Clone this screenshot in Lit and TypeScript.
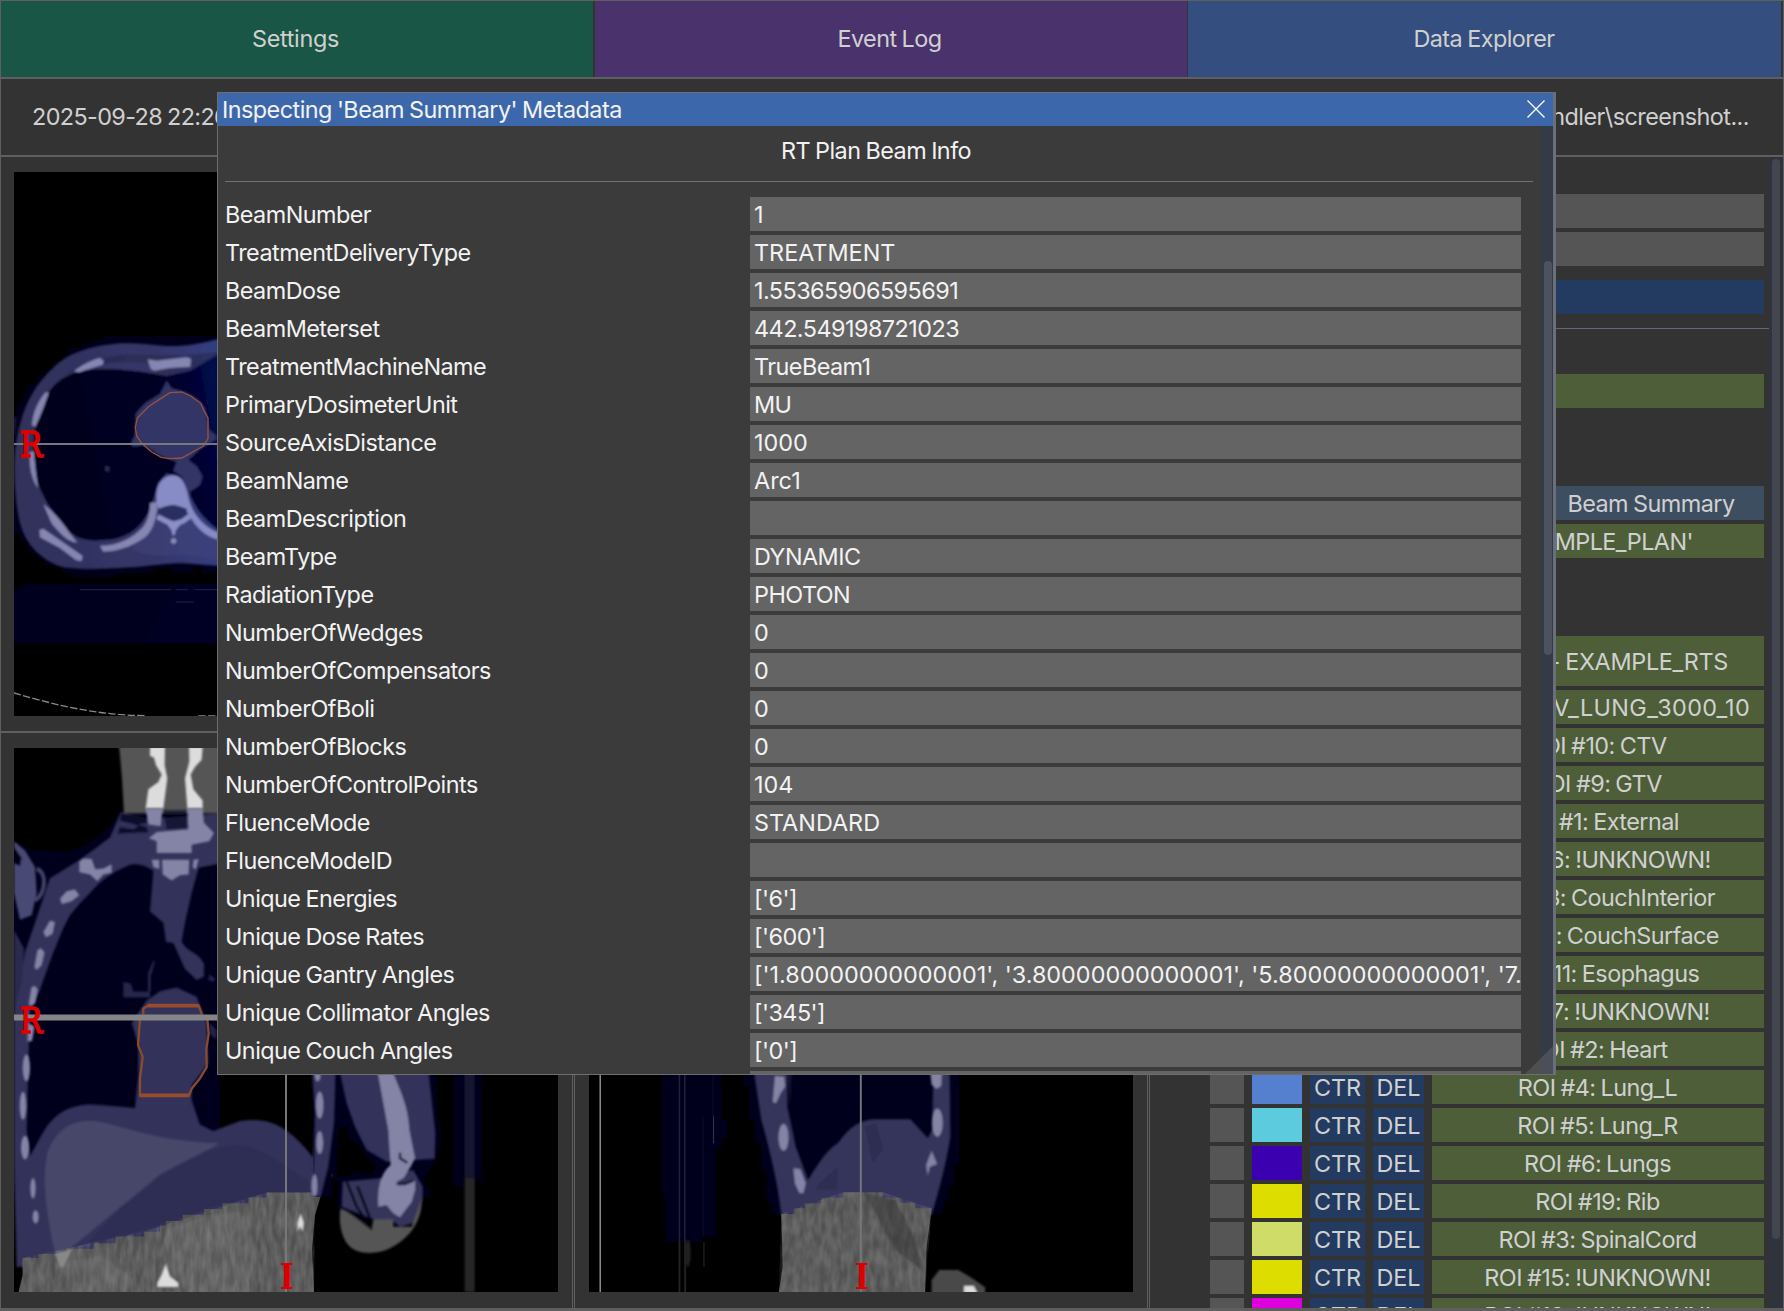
import { LitElement, html, css, svg } from "lit";
import { customElement } from "lit/decorators.js";
import { classMap } from "lit/directives/class-map.js";

// Label, value, and whether the value is set without tightened tracking.
const beamFields: [string, string, boolean?][] = [
  ["BeamNumber", "1"],
  ["TreatmentDeliveryType", "TREATMENT", true],
  ["BeamDose", "1.55365906595691"],
  ["BeamMeterset", "442.549198721023"],
  ["TreatmentMachineName", "TrueBeam1"],
  ["PrimaryDosimeterUnit", "MU"],
  ["SourceAxisDistance", "1000", true],
  ["BeamName", "Arc1", true],
  ["BeamDescription", ""],
  ["BeamType", "DYNAMIC"],
  ["RadiationType", "PHOTON"],
  ["NumberOfWedges", "0"],
  ["NumberOfCompensators", "0"],
  ["NumberOfBoli", "0"],
  ["NumberOfBlocks", "0"],
  ["NumberOfControlPoints", "104", true],
  ["FluenceMode", "STANDARD", true],
  ["FluenceModeID", ""],
  ["Unique Energies", "['6']"],
  ["Unique Dose Rates", "['600']"],
  ["Unique Gantry Angles", "['1.80000000000001', '3.80000000000001', '5.80000000000001', '7.", true],
  ["Unique Collimator Angles", "['345']"],
  ["Unique Couch Angles", "['0']"],
  ["", ""],
];

const rois: [string, string][] = [
  ["ROI #8: PTV_LUNG_3000_10", "#dd0000"],
  ["ROI #10: CTV", "#dd7700"],
  ["ROI #9: GTV", "#dd5500"],
  ["ROI #1: External", "#00dd00"],
  ["ROI #16: !UNKNOWN!", "#dddd00"],
  ["ROI #13: CouchInterior", "#5580cf"],
  ["ROI #12: CouchSurface", "#5580cf"],
  ["ROI #11: Esophagus", "#dddd00"],
  ["ROI #17: !UNKNOWN!", "#dddd00"],
  ["ROI #2: Heart", "#dd00dd"],
  ["ROI #4: Lung_L", "#5580cf"],
  ["ROI #5: Lung_R", "#5bcbdd"],
  ["ROI #6: Lungs", "#3b00b0"],
  ["ROI #19: Rib", "#dddd00"],
  ["ROI #3: SpinalCord", "#d0dc68"],
  ["ROI #15: !UNKNOWN!", "#dddd00"],
  ["ROI #18: !UNKNOWN!", "#dd00dd"],
];

const filters = svg`
  <defs>
    <filter id="soft"><feGaussianBlur stdDeviation="2.4" /></filter>
    <filter id="grain" x="0" y="0" width="1" height="1">
      <feTurbulence type="fractalNoise" baseFrequency=".06 .02" numOctaves="2" seed="4" />
      <feColorMatrix values="0 0 0 0 .45  0 0 0 0 .45  0 0 0 0 .45  .5 0 0 0 -.12" />
      <feComposite in2="SourceGraphic" operator="in" />
    </filter>
  </defs>`;

const axial = svg`
  <defs>
    <linearGradient id="tissue" x1="0" x2="1" y1="0" y2="0">
      <stop offset="0" stop-color="#30305a" /><stop offset=".7" stop-color="#36366a" /><stop offset="1" stop-color="#333e80" />
    </linearGradient>
    <linearGradient id="lung" gradientUnits="userSpaceOnUse" x1="100" x2="660" y1="400" y2="300">
      <stop offset="0" stop-color="#00001c" /><stop offset=".7" stop-color="#000024" /><stop offset=".88" stop-color="#000232" /><stop offset="1" stop-color="#000a4c" />
    </linearGradient>
  </defs>
  ${filters}
  <g transform="translate(-14 148) scale(.33333)">
    <path fill="#00001a" d="M660 48H380V48H315V60H275V70H245V84H205V104H190V125H165V150H140V165H110V195H85V220H70V250H50V290H42V640H60V665H85V700H110V715H135V735H165V745H190V758H215V772H345V760H440V757H460V745H515V758H545V758H580V742H605V760H660Z" />
    <path fill="#00001e" d="M42 807H68V792H660V970H42Z" />
    <path fill="#000030" d="M520 792H660V970H440Z" opacity=".35" filter="url(#soft)" />
    <g filter="url(#soft)">
      <path fill="url(#tissue)" d="M660 56C600 70 560 80 500 78C440 72 400 68 360 70C290 76 230 90 180 125C130 165 90 220 70 280C50 340 45 380 43 430C42 500 50 570 60 610C80 680 130 725 190 742C260 752 330 745 400 742C470 735 530 725 580 732L660 738Z" />
      <path fill="#42467c" d="M400 655L460 600L580 600L660 650V720C600 715 560 700 520 705C470 712 430 700 400 690Z" opacity=".45" />
      <path fill="#28284c" d="M230 155C300 120 400 125 450 128V150L500 168L570 150L660 112V95L560 105L440 104C350 100 280 110 200 160Z" opacity=".6" />
      <path fill="url(#lung)" d="M148 215C170 175 220 155 260 150C330 142 420 152 500 168L570 152L660 100V632C620 608 590 570 572 530L560 480L500 460L474 490C450 590 420 640 340 658C260 668 230 656 205 632C160 580 112 520 106 450C95 380 100 280 148 215Z" />
      <path fill="#333566" d="M500 183L515 205C560 215 600 235 615 265L628 330L648 345L650 358L625 372L600 387L565 420L592 440L608 470L600 495L570 515L545 470L520 452L530 425L500 415C470 405 450 385 430 376L400 380L392 372L405 345L408 280L435 250L480 222Z" />
      <g fill="#8586b2">
        <path d="M222 154C240 138 270 122 300 114L311 122L308 134C280 142 255 150 238 157Z" />
        <path d="M443 118L470 122L560 112L573 116L571 140L510 144L462 152L452 146Z" />
        <path d="M138 216L146 220C135 250 125 280 106 320L96 316C98 280 115 240 138 216Z" />
        <path d="M90 395H102C104 430 108 460 114 505C96 480 86 440 90 395Z" />
        <path d="M130 552C160 575 190 610 208 638L232 668C200 665 180 640 155 610Z" />
        <path d="M118 630L130 626L248 708L244 724L228 720L180 684L120 652Z" />
        <path d="M300 677C350 678 400 655 430 620C445 600 450 575 450 550L474 545C470 600 455 640 430 655C395 680 350 695 310 695Z" />
        <path d="M518 466C545 464 560 500 566 535C575 580 610 620 655 638V658C610 650 580 610 556 566C530 552 500 552 476 568L470 545C464 500 485 468 518 466Z" fill="#888cc6" />
      </g>
      <path fill="#2a2f60" d="M474 566L520 554L560 566L562 590L520 606L480 590Z" />
      <path fill="none" stroke="#8a8fc8" stroke-width="15" d="M472 590L500 604L522 612L548 604L570 588" />
      <path fill="#8a8fc8" d="M498 608H546L528 630L524 646H518L514 630Z" />
      <circle cx="521" cy="663" r="8" fill="#8a8cbc" /><ellipse cx="322" cy="446" rx="7" ry="9" fill="#2a2a48" />
      <path fill="#222248" d="M42 282L48 300L45 340L42 350Z" />
    </g>
    <path fill="none" stroke="#98533f" stroke-width="4" d="M510 218L545 216L572 228L602 250L612 272L624 294V356L610 378L578 396L545 414L510 416L484 412L455 396L425 370L410 348L406 322L412 294L445 260L488 232Z" />
    <path stroke="#242444" stroke-width="3" d="M240 809H513M527 809H563M585 809H660M527 846H581" />
    <path stroke="#77777f" stroke-width="6" d="M42 372H660" />
    <path fill="none" stroke="#8a8a8a" stroke-width="4" stroke-dasharray="22 7" d="M42 1119C150 1150 280 1186 440 1187M595 1188H660" />
    <text class="mark" transform="translate(59 412) scale(.86 1)">R</text>
  </g>`;

const coronal = svg`
  ${filters}
  <g transform="translate(-14 -18) scale(.33333 .37054)">
    <path fill="#00001c" d="M42 300L100 325H150L200 330L260 310L330 260L365 215H660V1260H1000V930H1000V1260H960L800 1250L630 1290L430 1360L280 1385L68 1425L42 1240Z" />
    <g filter="url(#soft)">
      <path fill="#545454" d="M357 40H660V225H372L366 130Z" />
      <path fill="#33335a" d="M362 222L450 240L660 225V360L596 372L575 440L555 520L545 570C560 600 590 595 612 630V665L590 675L555 645L520 575L498 572L490 520L450 490L460 380C430 362 400 358 380 368C350 380 320 395 290 420C260 450 235 470 210 500C185 540 175 570 160 600L120 700L90 760L85 900L80 1080L90 1150L130 1085C170 1020 240 1005 300 1012L405 1020L415 930V850L395 790L440 730L480 705L530 695L590 720L620 790L625 900L575 960L575 1000L600 1065L640 1082L720 1055C800 1045 860 1060 940 1155L950 930H1000V1200L965 1240L940 1310V1350L50 1450L42 1180V760L75 600L150 400L240 350L330 290Z" />
      <path fill="#00001c" d="M362 226L440 232L442 250L415 255L440 262L445 276L352 280L360 262L400 268L415 258L360 245Z" opacity=".75" />
      <path fill="#00001c" d="M490 215H560V265L500 268Z" opacity=".6" />
      <path fill="#47476a" d="M140 1150C160 1080 220 1050 280 1055C350 1060 450 1110 660 1115L480 1200L330 1310L210 1400L165 1410C145 1330 125 1230 140 1150Z" />
      <path fill="#2b2b50" d="M480 1200C560 1160 640 1120 720 1120C800 1130 860 1180 930 1220V1250H800L630 1290L430 1350L260 1385L340 1310Z" opacity=".55" />
      <path fill="#4a4a74" d="M42 300L75 325L105 370L110 440L95 500L60 512L42 440Z" />
      <path fill="none" stroke="#42426c" stroke-width="12" d="M110 375C142 385 138 440 105 460" />
      <path fill="#000018" d="M42 315L65 345L60 368L42 360Z" />
      <path fill="#2a2a4e" d="M42 540L72 590L65 680L42 760Z" />
      <path fill="#26264c" d="M370 680L392 684L400 706H450V722H370ZM444 655L462 620L464 628L452 665V705H444Z" />
      <path fill="#232350" d="M628 660L645 670L640 680L625 675ZM628 790L650 810L648 835L630 820Z" />
    </g>
    <path fill="#505050" d="M68 1425H115V1414H198V1400H282V1385H347V1367H432V1354H480V1337H498V1325H548V1308H612V1293H667V1277H745V1262H800V1248H965L945 1310L936 1400L942 1518H56L68 1470Z" />
    <path fill="#6a6a6a" opacity=".4" filter="url(#soft)" d="M500 1345L620 1310L720 1300L770 1400L740 1518H560L480 1420ZM160 1440L300 1420L400 1480L380 1518H240Z" />
    <path fill="#fff" filter="url(#grain)" d="M68 1425L430 1354L800 1248H945L942 1518H56Z" />
    <path filter="url(#soft)" fill="#888" d="M165 1412L218 1400L190 1450H180Z" />
    <g filter="url(#soft)" fill="#dcdcdc">
      <path d="M450 45H495L494 95L502 130L490 212H437L445 160L475 140L485 120L468 95L462 75L450 70Z" /><path d="M567 45H608L605 80L585 100L572 120L580 160L608 190V212H562L555 130L568 85Z" />
      <path d="M497 1440L510 1475L535 1492V1503H472V1492L485 1470Z" /><path d="M902 1305L912 1330L908 1354L900 1340L893 1354L892 1330Z" />
    </g>
    <g fill="#8484a6" filter="url(#soft)">
      <path d="M437 212H488L482 260L445 255ZM562 212H608L612 250L642 278L628 300L575 310V332H470V300L446 292L470 275L565 268Z" />
      <path d="M455 350H478V376L460 370ZM486 350H568L566 390L540 392L515 406L488 390ZM580 350L596 348L588 376L578 372Z" />
      <path d="M238 355L250 347L275 348L286 376L310 374L335 362V385L310 390L292 408L270 390L238 384ZM180 455L200 435L225 430L238 446L215 462L185 470ZM130 545L150 514L165 518L158 550L138 560ZM103 640L112 595L122 588L134 600L125 635L110 648ZM86 740L94 695L104 690L114 700L105 738L92 745ZM82 840L84 790L104 800L96 840Z" />
      <ellipse cx="79" cy="912" rx="11" ry="36" /><ellipse cx="69" cy="1014" rx="10" ry="38" /><ellipse cx="75" cy="1127" rx="12" ry="32" /><ellipse cx="99" cy="1237" rx="8" ry="28" /><ellipse cx="107" cy="1314" rx="9" ry="18" />
    </g>
    <path fill="none" stroke="#8b4a2d" stroke-width="7" d="M430 768V752L443 744H596L606 768M420 780L414 850L428 882L420 940V986H567L575 968L600 940L620 910L619 860L626 820L622 780" />
    <path stroke="#9a4c2a" stroke-width="10" d="M443 744H596M420 986H567" />
    <path stroke="#858587" stroke-width="16" d="M42 776H660" />
    <text class="mark" transform="translate(59 818) scale(.86 .9)">R</text>
  </g>
  <g transform="translate(186 302) scale(.33333)">
    <path fill="#00001c" d="M340 60H710V195L722 230V285L705 330L670 395L692 430V442H640L590 530L510 510L412 475L415 400L395 370V440H340Z" />
    <path fill="#000" d="M415 232H445V262L480 290L500 320L530 350L515 375L470 362L440 380H410V340Z" />
    <path fill="#00001c" d="M760 60H845V392L790 388V408H760Z" />
    <rect x="794" y="60" width="30" height="322" fill="#151530" filter="url(#soft)" /><rect x="794" y="382" width="30" height="344" fill="#262626" filter="url(#soft)" />
    <g filter="url(#soft)">
      <path fill="#33335a" d="M336 60H407L402 220L385 350L362 440L335 438L342 320L345 190ZM418 60H685L706 250L704 326L640 330L560 335L500 300L465 230L440 160Z" />
      <path fill="#34345c" d="M428 395L540 385L640 360L668 410V450L640 520L600 530L575 510L520 508L425 470Z" />
      <path fill="#555" d="M422 475L450 490L515 540L520 508H580V530H635L665 445C668 500 640 560 570 595C530 615 470 615 445 585C422 560 415 510 422 475Z" />
      <path fill="none" stroke="#00000c" stroke-width="7" d="M440 395L470 470L515 538M472 408L512 510M435 478L500 520" />
      <path fill="#8484a6" d="M532 60H575C600 120 625 170 628 240L645 325L632 350L610 385L588 396L620 402L645 392V420L635 455L612 485L600 502L580 490L560 465L535 470C532 420 540 370 572 345L565 240Z" />
      <path fill="none" stroke="#10102c" stroke-width="7" d="M600 308V325L622 338M590 402H615L640 392" />
      <g fill="#8484a6"><ellipse cx="353" cy="76" rx="8" ry="18" /><ellipse cx="359" cy="165" rx="11" ry="40" /><ellipse cx="359" cy="278" rx="10" ry="34" /><ellipse cx="343" cy="407" rx="9" ry="34" /></g>
    </g>
    <path stroke="#77777b" stroke-width="6" d="M258 60V726" />
    <text class="mark bold" transform="translate(239 716) scale(.87 1)">I</text>
  </g>`;

const sagittal = svg`
  ${filters}
  <g transform="translate(-19 302) scale(.38265 .33333)">
    <path fill="#00001c" d="M240 60H396V210H411V262H396V293H381V560H345V576H250V443H240ZM455 60H1017V345H1003V408H988V455H975V492H528V460H514V360H500V278H484V210H470V108H455Z" />
    <path stroke="#8a8a8a" stroke-width="4" d="M79 60V726" />
    <path stroke="#20203a" stroke-width="4" d="M286 60V576M300 60V576" /><path stroke="#232323" stroke-width="5" d="M286 576V726M301 576V726" /><path stroke="#161616" stroke-width="5" d="M350 576V650" />
    <path stroke="#303058" stroke-width="3" d="M375 195V280" /><path stroke="#0c0c28" stroke-width="3" d="M374 75V200M348 200V560" />
    <ellipse cx="308" cy="610" rx="7" ry="42" fill="#232323" filter="url(#soft)" />
    <g filter="url(#soft)">
      <path fill="#35355c" d="M480 60H568V170L590 290L622 390C650 340 670 300 700 280C730 230 760 208 800 208H890L935 265L946 240L950 60H992L994 260C985 330 965 420 945 495H552C545 400 515 270 500 210Z" />
      <path fill="#292948" d="M770 230L800 220L820 300L790 340ZM650 400L700 350L700 420H640ZM568 60H580L575 170Z" opacity=".5" />
      <g fill="#8484a6"><path d="M536 78L560 80L562 110L550 130L538 160L530 155ZM941 60H972L970 108L958 116L945 104Z" /><ellipse cx="558" cy="262" rx="13" ry="40" /><path d="M584 355L602 358L616 400L610 428L600 430L588 400Z" /><ellipse cx="960" cy="218" rx="14" ry="42" /><path d="M945 303L959 342L940 350L935 378L931 345Z" /></g>
    </g>
    <path fill="#505050" d="M552 492H586V475H613V460H657V443H713V427H817V443H859V458H902V475H945L932 590L928 726H546L556 650Z" />
    <path fill="#fff" filter="url(#grain)" d="M552 492L713 427H817L945 475L928 726H546Z" />
    <path fill="#343434" opacity=".5" filter="url(#soft)" d="M770 430L850 450L900 560L920 660L850 600Z" />
    <g filter="url(#soft)"><path fill="#484848" d="M945 740V690L965 660H1015L1045 680L1085 712V740Z" /><path fill="#ddd" d="M1030 708H1055L1065 730H1030Z" /></g>
    <path stroke="#77777b" stroke-width="5" d="M760 60V726" />
    <text class="mark bold" transform="translate(744 716) scale(.76 1)">I</text>
  </g>`;

@customElement("app-root")
export class AppRoot extends LitElement {
  static styles = css`
    :host { display: block; width: 1784px; height: 1311px; font-family: Inter, "Liberation Sans", sans-serif; font-size: 23.4px; line-height: 34px; letter-spacing: -0.54px; word-spacing: -1px; color: #d0d0d0; }
    * { box-sizing: border-box; }
    .app { position: relative; display: flex; flex-direction: column; height: 1311px; overflow: hidden; background: #333; border: 1px solid #5f5f5f; white-space: nowrap; }
    .tabs { display: grid; grid-template-columns: 593px 593px 593px; column-gap: 0.5px; height: 78px; border-bottom: 2px solid #5f5f5f; flex: none; }
    .tab { display: flex; align-items: center; justify-content: center; padding-right: 2px; border-right: 1px solid #333; }
    .settings { background: #1a5645; letter-spacing: -0.3px; padding-right: 3px; }
    .log { background: #4a336d; }
    .data { background: #344e7f; border: 0; padding-right: 1px; }
    .info { display: flex; justify-content: space-between; align-items: center; height: 78px; border-bottom: 2px solid #5f5f5f; padding: 0 34px 0 31px; flex: none; }
    .date { letter-spacing: -0.62px; }
    .main { display: flex; height: 1153px; flex: none; border-bottom: 2px solid #5f5f5f; }
    .views { display: grid; grid-template-columns: 574px 575px; grid-template-rows: 576px 575px; width: 1149px; flex: none; }
    .view { padding: 15px 0 0 13px; border-right: 3px double #5f5f63; border-bottom: 2px solid #5f5f5f; }
    .view:nth-child(2n) { padding-left: 14px; }
    .view:nth-child(n + 3) { border-bottom: 0; }
    .scan { display: block; width: 544px; height: 544px; background: #000; }
    .mark { font-family: "DejaVu Serif", serif; font-size: 105px; fill: #dd0000; stroke: #dd0000; stroke-width: 5; letter-spacing: 0; }
    .bold { font-weight: 700; stroke-width: 0; }
    .side { display: flex; width: 633px; flex: none; overflow: hidden; }
    .tree { display: flex; flex-direction: column; width: 619px; padding: 37px 4px 0 60px; flex: none; }
    .box { height: 34px; flex: none; margin: 0 1px 4px 0; background: #555; }
    .load { background: #233b61; margin-top: 10px; }
    .rule { height: 1px; background: #60687a; margin: 10px -4px 45px 0; flex: none; }
    .green { background: #4d5e39; display: flex; justify-content: flex-end; align-items: center; padding-top: 1px; }
    .summary { background: #3e4e61; margin: 74px 1px 4px auto; width: 226px; text-align: center; padding-top: 1px; }
    .plan { padding-right: 71px; margin-bottom: 78px; }
    .rts { height: 50px; padding-right: 36px; letter-spacing: -0.3px; }
    .roi { display: grid; grid-template-columns: 34px 50px 55px 51px 332px; column-gap: 8px; height: 34px; margin-bottom: 4px; flex: none; text-align: center; }
    .check { background: #555; }
    .act { background: #233b61; padding-top: 1px; letter-spacing: 0; height: 34px; }
    .name { background: #4d5e39; padding: 1px 1px 0 0; height: 34px; }
    .long { letter-spacing: 0.4px; padding-right: 13px; }
    .bar { width: 14px; background: #2f333d; padding: 2px 3px; flex: none; }
    .thumb { width: 8px; height: 1080px; border-radius: 4px; background: #434650; }
    .modal { position: absolute; left: 216px; top: 91px; width: 1339px; height: 983px; display: flex; flex-direction: column; background: #3b3b3b; border: 1px solid #6e6e6e; border-right: 3px solid #69707a; color: #f2f2f2; overflow: hidden; }
    .title { display: flex; justify-content: space-between; align-items: center; height: 33px; padding: 0 8px 0 4px; background: #3c68ab; flex: none; }
    .close { width: 18px; height: 18px; margin-top: -1px; }
    .body { display: flex; height: 948px; overflow: hidden; }
    .form { display: flex; flex-direction: column; width: 1323px; padding: 8px 7px 0; flex: none; }
    .heading { text-align: center; padding-right: 6px; height: 48px; border-bottom: 1px solid #6e747e; margin: 0 1px 15px 0; flex: none; }
    .row { display: grid; grid-template-columns: 525px 771px; height: 34px; margin-bottom: 4px; flex: none; }
    .label { padding-top: 1px; height: 34px; }
    .value { background: #646464; padding: 1px 0 0 4px; height: 34px; overflow: hidden; }
    .wide { letter-spacing: 0; word-spacing: 0; }
    .mbar { width: 13px; background: #353b46; padding-left: 3px; padding-top: 135px; flex: none; }
    .mthumb { width: 8px; height: 394px; border-radius: 4px; background: #4c535e; }
    .grip { position: absolute; right: 0; bottom: 0; width: 28px; height: 28px; background: rgba(110, 110, 118, 0.4); clip-path: polygon(100% 0, 100% 100%, 0 100%); }
  `;

  render() {
    return html`
      <div class="app">
        <div class="tabs">
          <div class="tab settings">Settings</div>
          <div class="tab log">Event Log</div>
          <div class="tab data">Data Explorer</div>
        </div>
        <div class="info"><span class="date">2025-09-28 22:26</span><span>handler\\screenshot...</span></div>
        <div class="main">
          <div class="views">
            <div class="view"><svg class="scan" viewBox="0 0 544 544">${axial}</svg></div>
            <div class="view"><svg class="scan" viewBox="0 0 544 544"></svg></div>
            <div class="view"><svg class="scan" viewBox="0 0 544 544">${coronal}</svg></div>
            <div class="view"><svg class="scan" viewBox="0 0 544 544">${sagittal}</svg></div>
          </div>
          <div class="side">
            <div class="tree">
              <div class="box"></div>
              <div class="box"></div>
              <div class="box load"></div>
              <div class="rule"></div>
              <div class="box green"></div>
              <div class="box summary">Beam Summary</div>
              <div class="box green plan">EXAMPLE_PLAN'</div>
              <div class="box green rts">- EXAMPLE_RTS</div>
              ${rois.map(
                ([name, color]) => html`<div class="roi">
                  <span class="check"></span><span style="background:${color}"></span>
                  <span class="act">CTR</span><span class="act">DEL</span
                  ><span class=${classMap({ name: true, long: name.length > 23 })}>${name}</span>
                </div>`
              )}
            </div>
            <div class="bar"><div class="thumb"></div></div>
          </div>
        </div>
        <div class="modal">
          <div class="title">
            <span>Inspecting 'Beam Summary' Metadata</span>
            <svg class="close" viewBox="0 0 18 18"><path d="M0.5 0.5L17.5 17.5M17.5 0.5L0.5 17.5" stroke="#fff" stroke-width="1.3" /></svg>
          </div>
          <div class="body">
            <div class="form">
              <div class="heading">RT Plan Beam Info</div>
              ${beamFields.map(
                ([k, v, wide]) => html`<div class="row">
                  <span class="label">${k}</span><span class=${classMap({ value: true, wide: !!wide })}>${v}</span>
                </div>`
              )}
            </div>
            <div class="mbar"><div class="mthumb"></div></div>
          </div>
          <div class="grip"></div>
        </div>
      </div>
    `;
  }
}
